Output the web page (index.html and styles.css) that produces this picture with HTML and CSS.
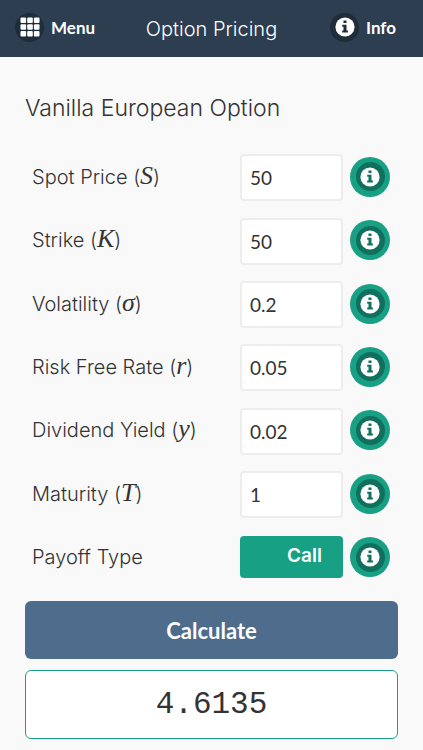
FILE: index.html
```html
<!DOCTYPE html>
<html lang="en">
<head>
<meta charset="utf-8">
<meta name="viewport" content="width=device-width, initial-scale=1">
<title>Option Pricing</title>
<link rel="stylesheet" href="styles.css">
</head>
<body>
<svg class="defs" aria-hidden="true">
  <symbol id="info" viewBox="0 0 20 20">
    <circle cx="10" cy="10" r="9.6" fill="#fff"/>
    <path d="M8.5 3.4h3v2.7h-3zM7.2 7.7h4.3v5.9h1.4v2H7.2v-2h1.3V9.7H7.2z" fill="currentColor"/>
  </symbol>
</svg>
<header class="bar">
  <button class="bar-button" type="button">
    <span class="disc"><svg class="icon" viewBox="0 0 20 20" fill="#fff"><rect x="0.5" y="0.5" width="5.6" height="5.6" rx="1"/><rect x="7.2" y="0.5" width="5.6" height="5.6" rx="1"/><rect x="13.9" y="0.5" width="5.6" height="5.6" rx="1"/><rect x="0.5" y="7.2" width="5.6" height="5.6" rx="1"/><rect x="7.2" y="7.2" width="5.6" height="5.6" rx="1"/><rect x="13.9" y="7.2" width="5.6" height="5.6" rx="1"/><rect x="0.5" y="13.9" width="5.6" height="5.6" rx="1"/><rect x="7.2" y="13.9" width="5.6" height="5.6" rx="1"/><rect x="13.9" y="13.9" width="5.6" height="5.6" rx="1"/></svg></span>
    Menu
  </button>
  <h1 class="bar-title">Option Pricing</h1>
  <button class="bar-button bar-end" type="button">
    <span class="disc"><svg class="icon"><use href="#info"/></svg></span>
    Info
  </button>
</header>
<form class="page">
  <h2 class="heading">Vanilla European Option</h2>
  <div class="fields">
    <div class="row">
      <label for="spot">Spot Price (<i>S</i>)</label>
      <input id="spot" type="text" inputmode="decimal" value="50">
      <button class="help" type="button" aria-label="About spot price"><span class="disc"><svg class="icon"><use href="#info"/></svg></span></button>
    </div>
    <div class="row">
      <label for="strike">Strike (<i>K</i>)</label>
      <input id="strike" type="text" inputmode="decimal" value="50">
      <button class="help" type="button" aria-label="About strike"><span class="disc"><svg class="icon"><use href="#info"/></svg></span></button>
    </div>
    <div class="row">
      <label for="vol">Volatility (<i>σ</i>)</label>
      <input id="vol" type="text" inputmode="decimal" value="0.2">
      <button class="help" type="button" aria-label="About volatility"><span class="disc"><svg class="icon"><use href="#info"/></svg></span></button>
    </div>
    <div class="row">
      <label for="rate">Risk Free Rate (<i>r</i>)</label>
      <input id="rate" type="text" inputmode="decimal" value="0.05">
      <button class="help" type="button" aria-label="About risk free rate"><span class="disc"><svg class="icon"><use href="#info"/></svg></span></button>
    </div>
    <div class="row">
      <label for="yield">Dividend Yield (<i>y</i>)</label>
      <input id="yield" type="text" inputmode="decimal" value="0.02">
      <button class="help" type="button" aria-label="About dividend yield"><span class="disc"><svg class="icon"><use href="#info"/></svg></span></button>
    </div>
    <div class="row">
      <label for="maturity">Maturity (<i>T</i>)</label>
      <input id="maturity" type="text" inputmode="decimal" value="1">
      <button class="help" type="button" aria-label="About maturity"><span class="disc"><svg class="icon"><use href="#info"/></svg></span></button>
    </div>
    <div class="row">
      <label for="payoff">Payoff Type</label>
      <select id="payoff"><option>Call</option><option>Put</option></select>
      <button class="help" type="button" aria-label="About payoff type"><span class="disc"><svg class="icon"><use href="#info"/></svg></span></button>
    </div>
  </div>
  <button class="calculate" type="button">Calculate</button>
  <output class="result">4.6135</output>
</form>
</body>
</html>
```
FILE: styles.css
```css
* {
  box-sizing: border-box;
}

body {
  display: flex;
  flex-direction: column;
  min-height: 100vh;
  margin: 0;
  background: #f9f9f9;
  color: #333;
  font-family: Inter, "Liberation Sans", sans-serif;
  font-weight: 300;
}

button,
input,
select {
  margin: 0;
  border: 0;
  font-family: Lato, sans-serif;
}

.defs {
  position: absolute;
  width: 0;
  height: 0;
}

.bar {
  display: grid;
  grid-template-columns: 1fr auto 1fr;
  align-items: center;
  height: 57px;
  padding: 0 15px 3px;
  background: #2c3e50;
  color: #fff;
}

.bar-button {
  display: flex;
  align-items: center;
  gap: 7px;
  padding: 0;
  background: none;
  color: #fff;
  font-size: 17px;
  font-weight: 700;
}

.bar-end {
  justify-self: end;
  margin-right: 12px;
}

.bar-title {
  margin: 0;
  padding-top: 4px;
  font-size: 20px;
  font-weight: 300;
  line-height: 28px;
}

.disc {
  display: grid;
  place-items: center;
  width: 29px;
  height: 29px;
  border-radius: 50%;
  background: #1f2c39;
  color: #1f2c39;
}

.icon {
  display: block;
  width: 20px;
  height: 20px;
}

.page {
  display: flex;
  flex: 1;
  flex-direction: column;
  padding: 35px 25px 11px;
}

.heading {
  margin: 0 0 21px;
  font-size: 23px;
  font-weight: 300;
  line-height: 32px;
}

.fields {
  display: grid;
  flex: 1;
  grid-auto-rows: 1fr;
  padding: 0 8px 0 7px;
}

.row {
  display: grid;
  grid-template-columns: 1fr 103px 40px;
  align-items: center;
  column-gap: 7px;
}

.row label {
  font-size: 20px;
  line-height: 28px;
}

.row i {
  font-family: "Liberation Serif", serif;
  font-size: 26px;
  font-weight: 400;
  line-height: 20px;
}

.row input {
  width: 100%;
  height: 47px;
  margin-top: 2px;
  padding: 0 8px;
  border: 2px solid #ededed;
  border-radius: 4px;
  background: #fff;
  color: #333;
  font-size: 19px;
}

.row select {
  width: 100%;
  height: 42px;
  padding: 0 0 4px 47px;
  border-radius: 4px;
  appearance: none;
  background: #18a085;
  color: #fff;
  font-family: Inter, sans-serif;
  font-size: 19px;
  font-weight: 600;
}

.help {
  display: grid;
  place-items: center;
  width: 40px;
  height: 40px;
  padding: 0;
  border-radius: 50%;
  background: #18a085;
}

.help .disc {
  background: #11705d;
  color: #11705d;
}

.calculate {
  height: 58px;
  margin: 12px 0 11px;
  border-radius: 6px;
  background: #4e6d8d;
  color: #fff;
  font-size: 22px;
  font-weight: 700;
}

.result {
  display: grid;
  place-items: center;
  height: 69px;
  border: 1px solid #18a085;
  border-radius: 6px;
  background: #fff;
  font-family: "Liberation Mono", monospace;
  font-size: 31px;
}
```
